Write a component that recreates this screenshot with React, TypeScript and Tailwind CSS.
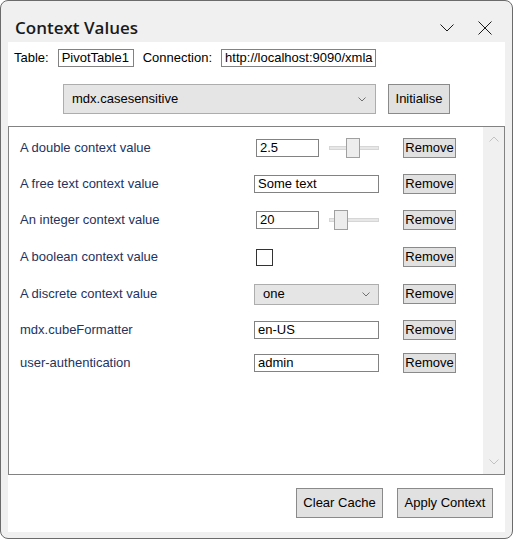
import React from 'react'

const arial = { fontFamily: '"Liberation Sans", Arial, sans-serif' }

function TextBox({ value, className }: { value: string; className: string }) {
  return (
    <div
      className={`flex h-[18px] items-center overflow-hidden whitespace-nowrap border border-[#828282] bg-white pl-[3px] text-[13px] text-black ${className}`}
    >
      {value}
    </div>
  )
}

function Slider({ thumb }: { thumb: string }) {
  return (
    <div className="relative ml-[10px] h-[20px] w-[50px]">
      <div className="absolute left-0 right-0 top-[8px] h-[4px] border border-[#d6d6d6] bg-[#e7e7e7]" />
      <div
        className={`absolute top-0 h-[20px] w-[14px] border border-[#a0a0a0] bg-[#ededed] ${thumb}`}
      />
    </div>
  )
}

function Chevron() {
  return (
    <svg width="8" height="5" viewBox="0 0 8 5">
      <path d="M0.5 0.5 L4 4 L7.5 0.5" fill="none" stroke="#707070" strokeWidth="1" />
    </svg>
  )
}

function WinButton({ label, className }: { label: string; className: string }) {
  return (
    <div
      className={`flex items-center justify-center border border-[#8a8a8a] bg-[#e1e1e1] text-[13px] text-black ${className}`}
    >
      {label}
    </div>
  )
}

type Row = { label: string; mt: string; control: React.ReactNode }

const rows: Row[] = [
  {
    label: 'A double context value',
    mt: 'mt-[11px]',
    control: (
      <div className="flex items-center pl-[2px]">
        <TextBox value="2.5" className="w-[63px]" />
        <Slider thumb="left-[17px]" />
      </div>
    ),
  },
  {
    label: 'A free text context value',
    mt: 'mt-[16px]',
    control: <TextBox value="Some text" className="w-[125px]" />,
  },
  {
    label: 'An integer context value',
    mt: 'mt-[16px]',
    control: (
      <div className="flex items-center pl-[2px]">
        <TextBox value="20" className="w-[63px]" />
        <Slider thumb="left-[5px]" />
      </div>
    ),
  },
  {
    label: 'A boolean context value',
    mt: 'mt-[17px]',
    control: (
      <div className="pl-[2px]">
        <div className="h-[17px] w-[17px] border border-[#333333] bg-white" />
      </div>
    ),
  },
  {
    label: 'A discrete context value',
    mt: 'mt-[17px]',
    control: (
      <div className="flex h-[21px] w-[125px] items-center justify-between border border-[#adadad] bg-[#e5e5e5] px-[8px] text-[13px] text-black">
        one
        <Chevron />
      </div>
    ),
  },
  {
    label: 'mdx.cubeFormatter',
    mt: 'mt-[16px]',
    control: <TextBox value="en-US" className="w-[125px]" />,
  },
  {
    label: 'user-authentication',
    mt: 'mt-[13px]',
    control: <TextBox value="admin" className="w-[125px]" />,
  },
]

export default function App() {
  return (
    <div className="h-[539px] w-[513px] bg-white" style={arial}>
      <div className="flex h-[539px] w-[513px] flex-col overflow-hidden rounded-[8px] border border-[#6b6b6b] bg-[#f0f0f0]">
        <div className="flex h-[41px] items-start justify-between pl-[14px] pr-[20px] pt-[15px]">
          <span
            className="text-[17px] font-semibold leading-[24px] text-[#1a1a1a]"
            style={{ fontFamily: '"Open Sans", "Noto Sans", sans-serif' }}
          >
            Context Values
          </span>
          <div className="flex items-center gap-[24px] pt-[5px]">
            <svg width="14" height="8" viewBox="0 0 14 8">
              <path d="M0.5 0.5 L7 7 L13.5 0.5" fill="none" stroke="#1a1a1a" strokeWidth="1" />
            </svg>
            <svg width="14" height="14" viewBox="0 0 14 14">
              <path d="M0.5 0.5 L13.5 13.5 M13.5 0.5 L0.5 13.5" fill="none" stroke="#1a1a1a" strokeWidth="1" />
            </svg>
          </div>
        </div>

        <div className="mx-[7px] mb-[6px] flex flex-1 flex-col bg-white">
          <div className="mt-[7px] flex h-[18px] items-center pl-[6px] text-[13px] text-black">
            <span>Table:</span>
            <TextBox value="PivotTable1" className="ml-[9px] w-[76px]" />
            <span className="ml-[9px]">Connection:</span>
            <TextBox value="http://localhost:9090/xmla" className="ml-[9px] w-[155px]" />
          </div>

          <div className="mt-[17px] flex h-[30px] items-stretch pl-[55px]">
            <div className="flex w-[313px] items-center justify-between border border-[#adadad] bg-[#e5e5e5] pl-[8px] pr-[9px] text-[13px] text-black">
              mdx.casesensitive
              <Chevron />
            </div>
            <WinButton label="Initialise" className="ml-[12px] w-[62px]" />
          </div>

          <div className="mt-[12px] flex h-[349px] border border-[#828282] bg-white">
            <div className="flex flex-1 flex-col">
              {rows.map((row) => (
                <div key={row.label} className={`flex h-[20px] items-center ${row.mt}`}>
                  <div className="w-[245px] pl-[11px] text-[13px] text-[#23335f]">{row.label}</div>
                  <div className="w-[149px]">{row.control}</div>
                  <WinButton label="Remove" className="h-[20px] w-[53px]" />
                </div>
              ))}
            </div>
            <div className="flex w-[21px] flex-col items-center justify-between bg-[#f0f0f0] py-[9px]">
              <svg width="10" height="6" viewBox="0 0 10 6">
                <path d="M0.5 5.5 L5 1 L9.5 5.5" fill="none" stroke="#c2c2c2" strokeWidth="1" />
              </svg>
              <svg width="10" height="6" viewBox="0 0 10 6">
                <path d="M0.5 0.5 L5 5 L9.5 0.5" fill="none" stroke="#c2c2c2" strokeWidth="1" />
              </svg>
            </div>
          </div>

          <div className="mt-[13px] flex justify-end gap-[14px] pr-[12px]">
            <WinButton label="Clear Cache" className="h-[30px] w-[87px]" />
            <WinButton label="Apply Context" className="h-[30px] w-[96px]" />
          </div>
        </div>
      </div>
    </div>
  )
}
